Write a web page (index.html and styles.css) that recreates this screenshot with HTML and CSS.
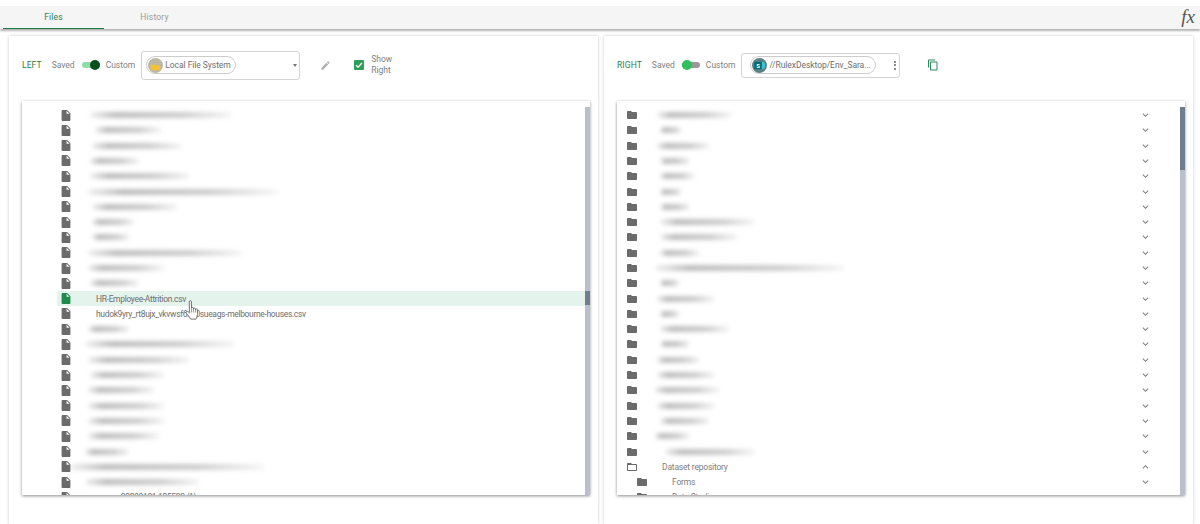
FILE: index.html
```html
<!DOCTYPE html>
<html lang="en">
<head>
  <meta charset="UTF-8">
  <title>Files</title>
  <link rel="stylesheet" href="styles.css">
</head>
<body>
  <svg class="sprites">
    <symbol id="i-file" viewBox="4 2 16 20"><path d="M6 2c-1.100 0-2 .9-2 2v16c0 1.100.9 2 2 2h12c1.100 0 2-.9 2-2V8l-6-6H6zm7 7V3.500L18.500 9H13z"/></symbol>
    <symbol id="i-folder" viewBox="2 4 20 16"><path d="M10 4H4c-1.100 0-1.990.9-1.990 2L2 18c0 1.100.9 2 2 2h16c1.100 0 2-.9 2-2V8c0-1.100-.9-2-2-2h-8l-2-2z"/></symbol>
    <symbol id="i-folder-open" viewBox="2 4 20 16"><path d="M20 6h-8l-2-2H4c-1.100 0-1.990.9-1.990 2L2 18c0 1.100.9 2 2 2h16c1.100 0 2-.9 2-2V8c0-1.100-.9-2-2-2zm0 12H4V8h16v10z"/></symbol>
    <symbol id="i-down" viewBox="6 8 12 8"><path d="M7.410 8.590L12 13.170l4.590-4.580L18 10l-6 6-6-6 1.410-1.410z"/></symbol>
    <symbol id="i-up" viewBox="6 8 12 8"><path d="M7.410 15.410L12 10.830l4.590 4.580L18 14l-6-6-6 6 1.410 1.410z"/></symbol>
  </svg>

  <div class="tabs">
    <div class="tab active">Files</div>
    <div class="tab">History</div>
    <div class="fx">fx</div>
  </div>

  <div class="panels">
    <section class="panel panel-left">
      <div class="toolbar">
        <span class="side">LEFT</span>
        <span class="label saved">Saved</span>
        <span class="toggle on"><i></i></span>
        <span class="label">Custom</span>
        <div class="picker picker-select">
          <span class="chip">
            <span class="avatar avatar-local">
              <svg viewBox="0 0 16 16"><path fill="#f2c230" d="M3 7h4l1 1h5v5H3z"/></svg>
            </span>
            Local File System
          </span>
          <span class="caret"></span>
        </div>
        <svg class="pencil" viewBox="0 0 24 24"><path d="M3 17.250V21h3.750L17.810 9.940l-3.750-3.750L3 17.250zM20.710 7.040c.39-.39.39-1.020 0-1.410l-2.340-2.340c-.39-.39-1.020-.39-1.410 0l-1.830 1.830 3.750 3.750 1.830-1.830z"/></svg>
        <span class="checkbox">
          <svg viewBox="0 0 10 10"><path d="M2 5.200l2.100 2L8 3" fill="none" stroke="#fff" stroke-width="1.300"/></svg>
        </span>
        <span class="label show-right">Show<br>Right</span>
      </div>
      <div class="card">
        <div class="list" id="left-list"></div>
        <div class="scrollbar"><div class="thumb thumb-left"></div></div>
        <svg class="hand" viewBox="0 0 14 20">
          <path fill="#fff" stroke="#444" stroke-width=".7" stroke-linejoin="round" d="M4 1.600c0-1.200 2-1.200 2 0v6.200c0-1 1.900-1 1.900 0v.7c0-1 1.900-1 1.900.1v.6c0-1 1.900-.9 1.900.2v4.400c0 1.800-.8 3-1.400 4.400H5.200C4.600 16.700 2.500 14.400 1 12.300c-.8-1.200.7-2.300 1.700-1.300L4 12.200z"/>
          <path fill="none" stroke="#444" stroke-width=".5" d="M6 8v4M7.900 8.500V12M9.800 9.200V12"/>
        </svg>
      </div>
    </section>

    <section class="panel panel-right">
      <div class="toolbar">
        <span class="side">RIGHT</span>
        <span class="label saved">Saved</span>
        <span class="toggle off"><i></i></span>
        <span class="label">Custom</span>
        <div class="picker picker-path">
          <span class="chip">
            <span class="avatar avatar-share">
              <svg viewBox="0 0 16 16">
                <circle cx="10" cy="8" r="4" fill="#37c6d0"/>
                <rect x="2.500" y="4" width="8" height="8" fill="#036c70"/>
                <text x="6.500" y="10.500" class="share-letter">S</text>
              </svg>
            </span>
            //RulexDesktop/Env_Sara...
          </span>
          <span class="kebab"><i></i><i></i><i></i></span>
        </div>
        <svg class="copy" viewBox="0 0 24 24"><path d="M16 1H4c-1.100 0-2 .9-2 2v14h2V3h12V1zm3 4H8c-1.100 0-2 .9-2 2v14c0 1.100.9 2 2 2h11c1.100 0 2-.9 2-2V7c0-1.100-.9-2-2-2zm0 16H8V7h11v14z"/></svg>
      </div>
      <div class="card">
        <div class="list" id="right-list"></div>
        <div class="scrollbar"><div class="thumb thumb-right"></div></div>
      </div>
    </section>
  </div>

  <script src="script.js"></script>
</body>
</html>
```

FILE: styles.css
```css
* {
  box-sizing: border-box;
}
html, body {
  height: 100%;
}
body {
  font-family: Roboto, "Liberation Sans", sans-serif;
  margin: 0;
  padding-top: 6px;
  background: #fff;
  color: #6e6e6e;
  overflow: hidden;
  display: flex;
  flex-direction: column;
}
.sprites {
  display: none;
}

/* top tabs */
.tabs {
  display: flex;
  flex: none;
  height: 23px;
  padding-left: 3px;
  background: #f5f5f5;
  box-shadow: 0 2px 2px rgba(0,0,0,0.3);
}
.tab {
  width: 101px;
  font-size: 8.5px;
  letter-spacing: 0.2px;
  line-height: 22px;
  text-align: center;
  color: #9a9a9a;
}
.tab.active {
  color: #2e7d4f;
  border-bottom: 1px solid #1f7a45;
}
.fx {
  margin-left: auto;
  margin-right: 5px;
  font-family: "Liberation Serif", serif;
  font-style: italic;
  font-size: 19px;
  line-height: 22px;
  color: #555;
}

/* panels */
.panels {
  display: flex;
  flex: 1;
  min-height: 0;
  gap: 6px;
  padding: 7px 7px 0 9px;
}
.panel {
  width: 589px;
  padding: 0 8px 0 13px;
  box-shadow: 0 0 3px rgba(0,0,0,0.22);
}
.toolbar {
  display: flex;
  align-items: center;
  height: 58px;
  margin-bottom: 7px;
}
.side {
  font-size: 8.5px;
  color: #2e7d4f;
  letter-spacing: 0.1px;
}
.label {
  color: #808080;
  font-size: 8.5px;
}
.saved {
  margin-left: 10px;
}
.toggle {
  position: relative;
  width: 18px;
  height: 6px;
  margin: 0 6px 0 7px;
  border-radius: 3px;
}
.toggle i {
  position: absolute;
  top: -2px;
  width: 10px;
  height: 10px;
  border-radius: 50%;
}
.toggle.on {
  background: #8fdca8;
}
.toggle.on i {
  right: 0;
  background: #0b4f1c;
}
.toggle.off {
  background: #999;
}
.toggle.off i {
  left: 0;
  background: #2fbf5b;
}

.picker {
  display: flex;
  align-items: center;
  width: 159px;
  margin-left: 6px;
  border: 1px solid #d4d4d4;
  border-radius: 3px;
  font-size: 8.5px;
  letter-spacing: -0.05px;
  color: #6e6e6e;
}
.picker-select {
  height: 29px;
  padding-left: 4px;
}
.picker-path {
  height: 25px;
  padding-left: 8px;
}
.chip {
  display: flex;
  align-items: center;
  gap: 2px;
  height: 18px;
  padding: 0 4px 0 1px;
  border: 1px solid #ccc;
  border-radius: 9px;
  white-space: nowrap;
}
.picker-select .chip {
  width: 90px;
}
.picker-path .chip {
  width: 126px;
}
.avatar {
  width: 15px;
  height: 15px;
  border-radius: 50%;
  flex: none;
  overflow: hidden;
}
.avatar svg {
  display: block;
}
.avatar-local {
  background: #bdb7a6;
}
.avatar-share {
  background: #5d7f86;
}
.share-letter {
  font-size: 6.5px;
  font-weight: 700;
  fill: #fff;
  text-anchor: middle;
}
.caret {
  width: 0;
  height: 0;
  margin-left: auto;
  margin-right: 2px;
  border-left: 2.5px solid transparent;
  border-right: 2.5px solid transparent;
  border-top: 3px solid #777;
}
.kebab {
  display: flex;
  flex-direction: column;
  gap: 1.5px;
  margin-left: auto;
  margin-right: 3px;
}
.kebab i {
  width: 2px;
  height: 2px;
  border-radius: 50%;
  background: #666;
}
.pencil {
  width: 11px;
  height: 11px;
  margin-left: 20px;
  fill: #b0b0b0;
}
.checkbox {
  display: flex;
  width: 10px;
  height: 10px;
  margin-left: 23px;
  border-radius: 1px;
  background: #2f9e5b;
}
.show-right {
  margin-left: 7px;
  line-height: 11px;
}
.copy {
  width: 12px;
  height: 12px;
  margin-left: 27px;
  fill: #2e8b5c;
}

/* lists */
.card {
  position: relative;
  display: flex;
  height: 394px;
  overflow: hidden;
  box-shadow: 0 1px 3px rgba(0,0,0,0.45);
}
.list {
  flex: 1;
  min-width: 0;
  padding-top: 6.4px;
}
.scrollbar {
  flex: none;
  width: 5px;
  margin-top: 6px;
  background: #b9c0cb;
}
.thumb {
  background: #6f7d8c;
}
.thumb-left {
  height: 14px;
  margin-top: 184px;
}
.thumb-right {
  height: 63px;
}
.row {
  display: flex;
  align-items: center;
  height: 15.3px;
  font-size: 8.5px;
  letter-spacing: -0.34px;
  white-space: nowrap;
}
.row .icon {
  flex: none;
  fill: #6b6b6b;
}
.row-file {
  margin-left: 35px;
  padding-left: 4px;
}
.row-file .icon {
  width: 10px;
  height: 11px;
  margin-right: 17px;
}
.row-file .name {
  padding-left: 8px;
}
.row-file.selected {
  background: #e4f3ec;
}
.row-file.selected .icon {
  fill: #1f8a4c;
}
.row-folder {
  padding-left: 10px;
  letter-spacing: -0.2px;
}
.row-folder .icon {
  width: 10px;
  height: 8px;
  margin-right: 18px;
}
.row-folder .name {
  padding-left: 7px;
  color: #808080;
}
.row-child {
  padding-left: 20px;
}
.row-folder .chevron {
  flex: none;
  width: 7px;
  height: 4px;
  margin-left: auto;
  margin-right: 31px;
  fill: #808080;
}
.smudge {
  height: 6px;
  border-radius: 3px;
  background: linear-gradient(90deg, rgba(185,185,185,0.2), #bdbdbd 18%, #cdcdcd 65%, rgba(200,200,200,0.15));
  filter: blur(2px);
}
.hand {
  position: absolute;
  left: 163px;
  top: 199px;
  width: 15px;
  height: 21px;
}
```

FILE: script.js
```js
// [start x, end x] of each blurred name, in page pixels
const leftRows = [
  [90, 232], [95, 162], [92, 182], [90, 140], [90, 190], [88, 278], [92, 178],
  [92, 135], [92, 130], [88, 243], [88, 165], [90, 140],
  'HR-Employee-Attrition.csv',
  'hudok9yry_rt8ujx_vkvwsf6xlr0sueags-melbourne-houses.csv',
  [88, 130], [85, 235], [88, 190], [90, 165], [88, 155], [88, 165], [88, 165],
  [88, 160], [85, 130], [70, 265], [85, 200],
  '\u00a0'.repeat(14) + '22200101 125522 (1)'
];

const rightRows = [
  [657, 732], [660, 682], [657, 710], [660, 690], [660, 695], [660, 682], [660, 690],
  [660, 755], [660, 738], [660, 700], [655, 845], [660, 680], [657, 715], [660, 680],
  [660, 730], [660, 690], [657, 700], [657, 715], [655, 720], [657, 715], [660, 710],
  [655, 690], [665, 755]
];

function icon(name, cls) {
  return `<svg class="${cls}"><use href="#${name}"/></svg>`;
}

function nameCell(item, baseX) {
  if (typeof item === 'string') {
    return `<span class="name">${item}</span>`;
  }
  const offset = item[0] - baseX;
  const width = item[1] - item[0];
  return `<div class="smudge" style="margin-left:${offset}px;width:${width}px"></div>`;
}

const leftHtml = leftRows.map(function (item) {
  const selected = item === 'HR-Employee-Attrition.csv' ? ' selected' : '';
  return `<div class="row row-file${selected}">${icon('i-file', 'icon')}${nameCell(item, 88)}</div>`;
}).join('');
document.getElementById('left-list').innerHTML = leftHtml;

function folderRow(cell, opts) {
  const o = opts || {};
  return `<div class="row row-folder${o.child ? ' row-child' : ''}">` +
    icon(o.open ? 'i-folder-open' : 'i-folder', 'icon') + cell +
    icon(o.open ? 'i-up' : 'i-down', 'chevron') + '</div>';
}

let rightHtml = rightRows.map(function (item) {
  return folderRow(nameCell(item, 655));
}).join('');
rightHtml += folderRow(nameCell('Dataset repository'), { open: true });
rightHtml += folderRow(nameCell('Forms'), { child: true });
rightHtml += folderRow(nameCell('Data Studio'), { child: true });
document.getElementById('right-list').innerHTML = rightHtml;
```
